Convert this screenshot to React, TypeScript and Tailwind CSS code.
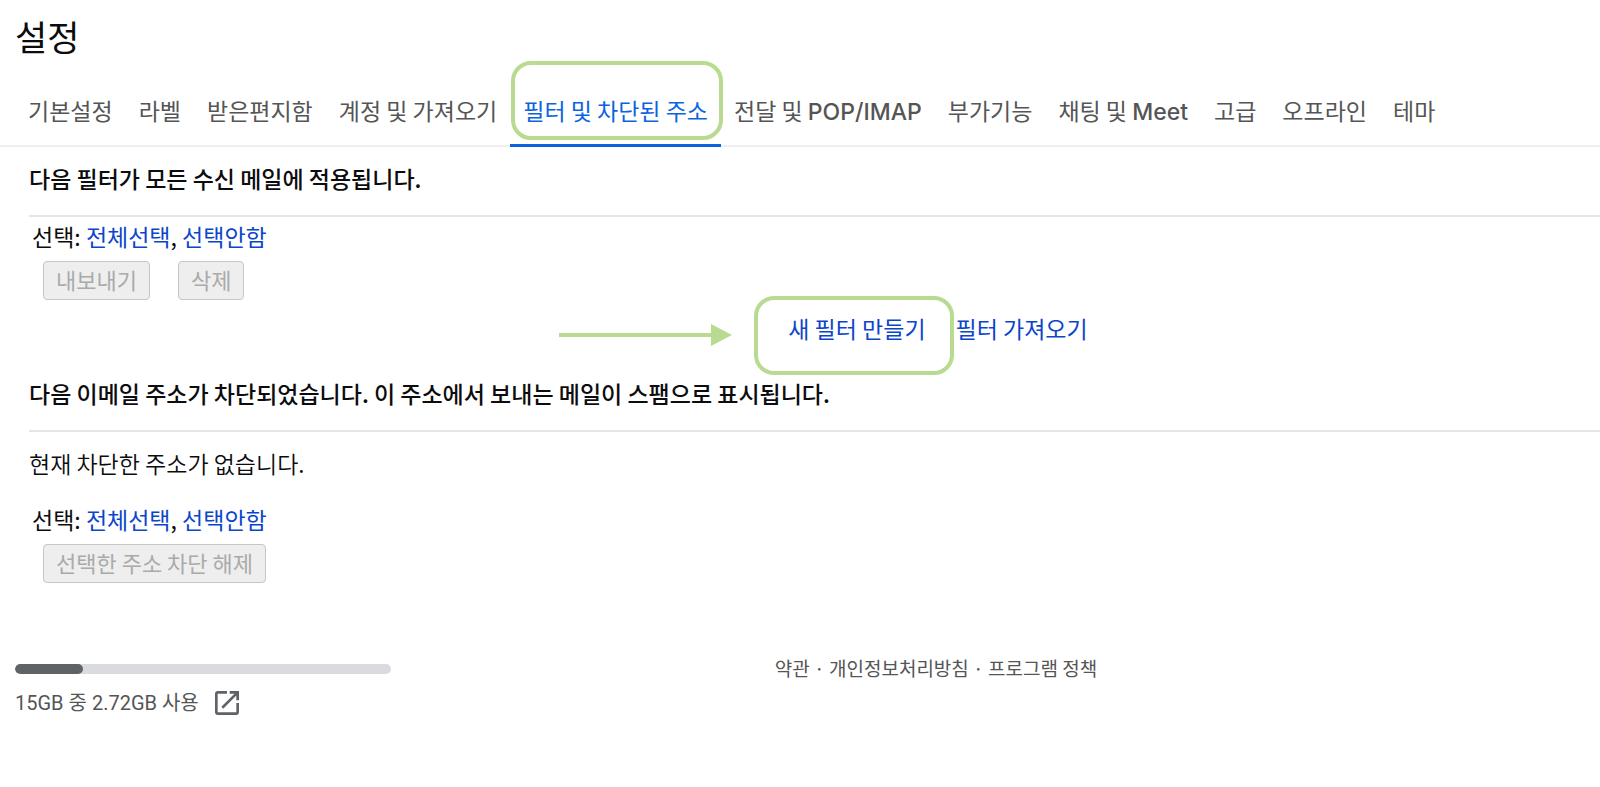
import { useState } from "react";

const tabs = [
    { label: "기본설정" },
    { label: "라벨" },
    { label: "받은편지함" },
    { label: "계정 및 가져오기" },
    { label: "필터 및 차단된 주소", highlight: true },
    { label: "전달 및 ", latin: "POP/IMAP" },
    { label: "부가기능" },
    { label: "채팅 및 ", latin: "Meet" },
    { label: "고급" },
    { label: "오프라인" },
    { label: "테마" },
];

const storage = { used: 2.72, total: 15 };

const SelectRow = () => (
    <p className="pl-[3px] leading-8">
        선택:{" "}
        <a href="#all" className="text-[#0b45cc]">
            전체선택
        </a>
        ,{" "}
        <a href="#none" className="text-[#0b45cc]">
            선택안함
        </a>
    </p>
);

const DisabledBtn = (props: { label: string }) => (
    <button
        type="button"
        disabled
        className="h-[39px] rounded-[4px] border border-[#c6c6c6] bg-[#eeeeee] px-3 pb-1 text-[22px] leading-8 text-[#aaaaaa]"
    >
        {props.label}
    </button>
);

const SectionTitle = (props: { children: string }) => (
    <h2 className="border-b-2 border-[#e5e5e5] pt-[13px] pb-[19px] font-medium leading-9">
        {props.children}
    </h2>
);

export default function App() {
    const [active, setActive] = useState("필터 및 차단된 주소");

    return (
        <div className="overflow-x-clip bg-white font-['Noto_Sans_CJK_KR',sans-serif] text-[23px] text-[#0c0c0e]">
            <h1 className="px-[15px] pt-3 text-[35px] leading-[48px]">설정</h1>
            <nav className="mt-[19px] flex border-b-2 border-[#efefef] pl-[15px]">
                {tabs.map((tab) => (
                    <button
                        key={tab.label}
                        type="button"
                        onClick={() => setActive(tab.label)}
                        className={`relative -mb-0.5 shrink-0 cursor-pointer border-b-[3px] px-[13px] pt-[15px] pb-[18px] leading-8 whitespace-pre ${
                            active === tab.label
                                ? "border-[#0b63e0] text-[#0b63e0]"
                                : "border-transparent text-[#555555]"
                        }`}
                    >
                        {tab.label}
                        {tab.latin && (
                            <span className="font-[Inter,sans-serif] leading-none font-medium">
                                {tab.latin}
                            </span>
                        )}
                        {tab.highlight && (
                            <span className="pointer-events-none absolute -top-[18px] -right-0.5 bottom-1 left-px rounded-[20px] border-4 border-[#b9db91]" />
                        )}
                    </button>
                ))}
            </nav>

            <main className="pl-[29px]">
                <section>
                    <SectionTitle>다음 필터가 모든 수신 메일에 적용됩니다.</SectionTitle>
                    <div className="pt-[3px]">
                        <SelectRow />
                        <div className="mt-[9px] flex gap-7 pl-[14px]">
                            <DisabledBtn label="내보내기" />
                            <DisabledBtn label="삭제" />
                        </div>
                    </div>
                    <div className="mt-3 flex justify-center gap-[30px] pl-[247px] leading-8">
                        <div className="relative">
                            <a href="#create" className="text-[#0b45cc]">
                                새 필터 만들기
                            </a>
                            <span className="pointer-events-none absolute -top-4 -right-7 -left-[34px] h-[79px] rounded-[20px] border-4 border-[#b9db91]" />
                            <svg
                                viewBox="0 0 174 24"
                                className="absolute top-[11px] -left-[229px] h-6 w-[174px]"
                                fill="#b9db91"
                            >
                                <path d="M0 10h152V1l21 11-21 11v-9H0z" />
                            </svg>
                        </div>
                        <a href="#import" className="text-[#0b45cc]">
                            필터 가져오기
                        </a>
                    </div>
                </section>

                <section className="mt-[18px]">
                    <SectionTitle>
                        다음 이메일 주소가 차단되었습니다. 이 주소에서 보내는 메일이 스팸으로 표시됩니다.
                    </SectionTitle>
                    <p className="pt-[15px] pb-6 font-[350] leading-8">현재 차단한 주소가 없습니다.</p>
                    <SelectRow />
                    <div className="mt-[9px] flex pl-[14px]">
                        <DisabledBtn label="선택한 주소 차단 해제" />
                    </div>
                </section>
            </main>

            <footer className="mt-[69px] flex gap-4 pr-[135px] pl-[15px] leading-7 text-[#555555]">
                <div className="w-[376px]">
                    <div className="mt-3 h-2.5 overflow-hidden rounded-full bg-[#dadbe0]">
                        <div
                            className="h-full rounded-full bg-[#5f6368]"
                            style={{ width: `${(storage.used / storage.total) * 100}%` }}
                        />
                    </div>
                    <div className="mt-[15px] flex items-center gap-4 font-[Roboto,'Noto_Sans_CJK_KR',sans-serif] text-[20px]">
                        <span>
                            {storage.total}GB 중 {storage.used}GB 사용
                        </span>
                        <a href="#storage" aria-label="저장용량 관리">
                            <svg viewBox="3 3 18 18" className="h-6 w-6" fill="#5f6368">
                                <path d="M19 19H5V5h7V3H5c-1.110 0-2 .9-2 2v14c0 1.100.890 2 2 2h14c1.100 0 2-.9 2-2v-7h-2v7zM14 3v2h3.590l-9.830 9.830 1.410 1.410L19 6.410V10h2V3h-7z" />
                            </svg>
                        </a>
                    </div>
                </div>
                <p className="flex-1 pt-0.5 text-center text-[19px]">
                    <a href="#terms">약관</a> · <a href="#privacy">개인정보처리방침</a> ·{" "}
                    <a href="#policy">프로그램 정책</a>
                </p>
            </footer>
        </div>
    );
}
